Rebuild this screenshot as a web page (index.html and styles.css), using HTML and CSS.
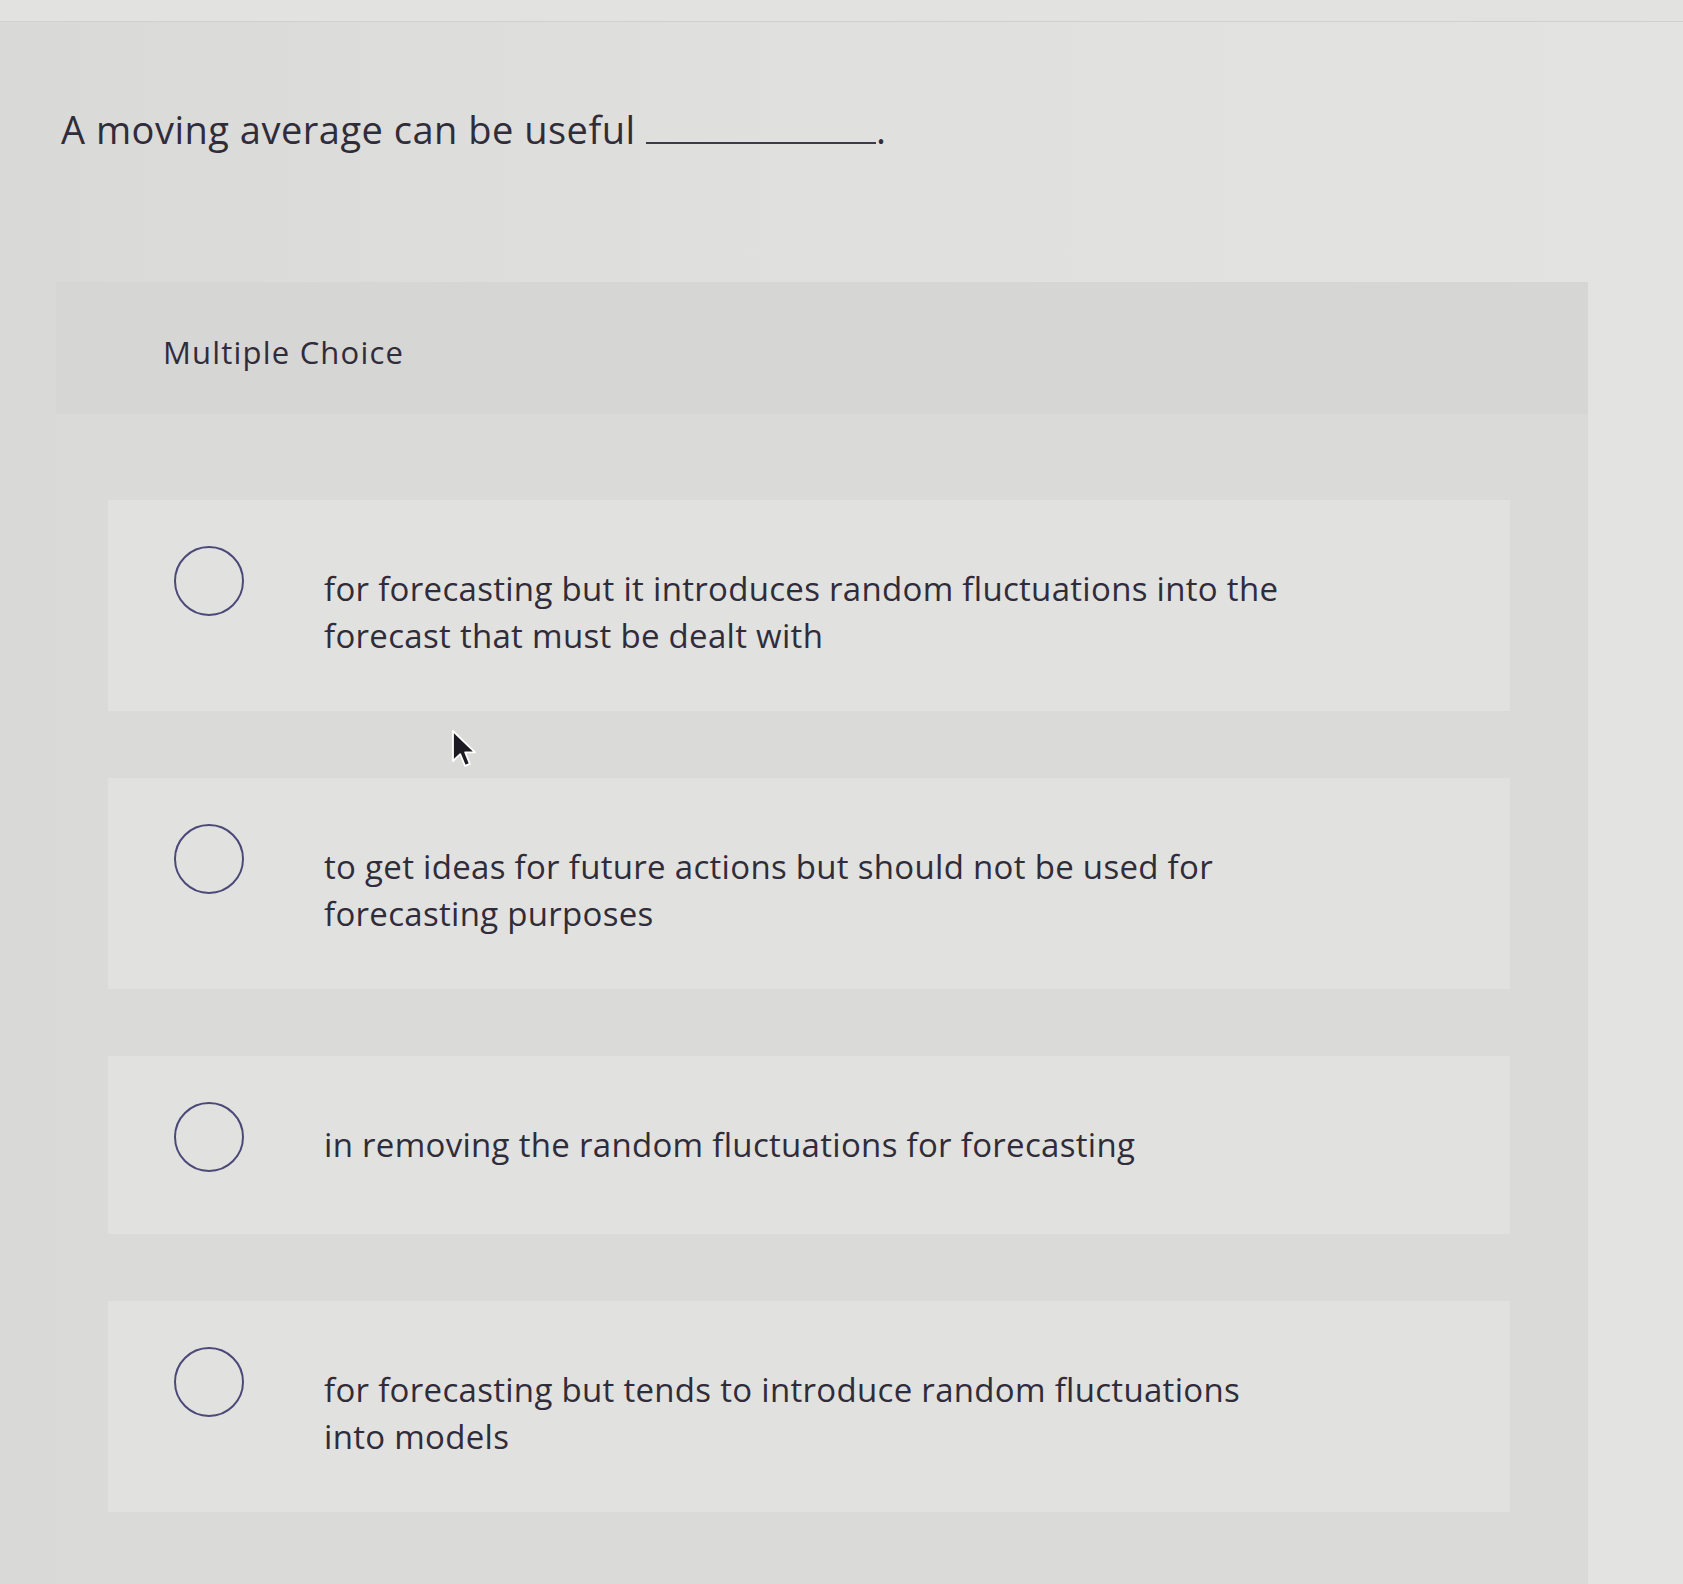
FILE: index.html
```html
<!DOCTYPE html>
<html lang="en">
<head>
<meta charset="utf-8">
<title>Multiple Choice</title>
<link rel="stylesheet" href="styles.css">
</head>
<body>
<div class="topline"></div>
<main class="page">
  <p class="question">A moving average can be useful <span class="blank"></span>.</p>
  <section class="panel">
    <div class="panel-head">Multiple Choice</div>
    <ul class="options">
      <li class="option"><span class="radio"></span><span class="label">for forecasting but it introduces random fluctuations into the forecast that must be dealt with</span></li>
      <li class="option"><span class="radio"></span><span class="label">to get ideas for future actions but should not be used for forecasting purposes</span></li>
      <li class="option option-single"><span class="radio"></span><span class="label">in removing the random fluctuations for forecasting</span></li>
      <li class="option"><span class="radio"></span><span class="label">for forecasting but tends to introduce random fluctuations into models</span></li>
    </ul>
  </section>
</main>
<svg class="cursor" width="26" height="40" viewBox="0 0 13 20" aria-hidden="true">
  <path d="M1 1 L1 16 L4.6 12.6 L7 18.4 L9.4 17.4 L7.1 11.7 L12 11.7 Z" fill="#1c1a22" stroke="#ffffff" stroke-width="0.9" stroke-linejoin="round"/>
</svg>
</body>
</html>
```

FILE: styles.css
```css
* { box-sizing: border-box; }

html, body {
  margin: 0;
  padding: 0;
}

body {
  min-height: 1584px;
  background: linear-gradient(to right, #d9d9d7 0%, #dfdfdd 40%, #e3e4e2 100%);
  font-family: "Open Sans", "Noto Sans", "Liberation Sans", sans-serif;
  color: #302c3a;
  position: relative;
  overflow: hidden;
}

.topline {
  height: 22px;
  border-bottom: 1px solid #d0d0ce;
  background: #e2e2e0;
}

.page {
  padding: 85px 95px 0 56px;
}

.question {
  margin: 0 0 131px 5px;
  font-size: 38px;
  line-height: 44px;
  font-weight: 400;
  letter-spacing: 0.5px;
}

.blank {
  display: inline-block;
  width: 230px;
  height: 0;
  border-bottom: 2px solid #3e3a4e;
  margin-left: 0;
}

.panel {
  background: #dadad8;
  padding-bottom: 120px;
}

.panel-head {
  height: 132px;
  display: flex;
  align-items: center;
  padding: 8px 0 0 107px;
  background: #d6d6d4;
  font-size: 31px;
  letter-spacing: 1.2px;
}

.options {
  list-style: none;
  margin: 0;
  padding: 86px 78px 0 52px;
  display: flex;
  flex-direction: column;
  gap: 67px;
}

.option {
  display: flex;
  align-items: flex-start;
  background: #e1e1df;
  padding: 65px 0 52px 66px;
}

.option-single {
  padding-bottom: 62px;
}

.radio {
  flex: 0 0 70px;
  width: 70px;
  height: 70px;
  margin-top: -19px;
  border: 2px solid #4c4878;
  border-radius: 50%;
}

.label {
  margin-left: 80px;
  max-width: 975px;
  font-size: 33px;
  line-height: 47px;
  letter-spacing: 0.3px;
}

.cursor {
  position: absolute;
  left: 451px;
  top: 729px;
}
```
